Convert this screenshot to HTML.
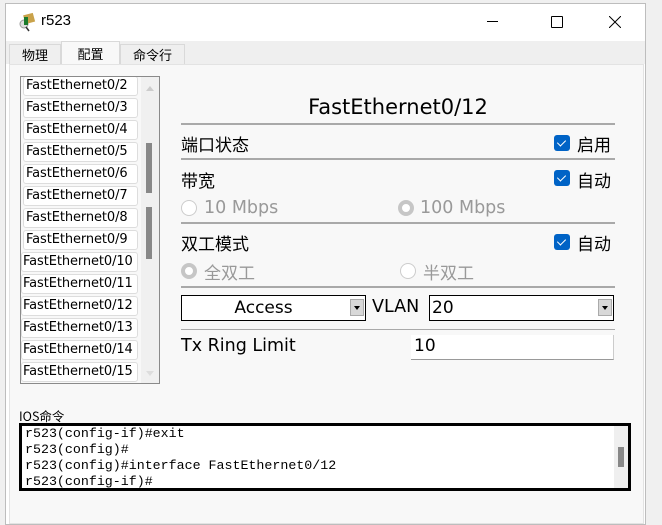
<!DOCTYPE html><html><head><meta charset="utf-8"><style>
*{margin:0;padding:0;box-sizing:border-box}
body{width:662px;height:525px;position:relative;overflow:hidden;background:#f0f0f0;font-family:"DejaVu Sans","Liberation Sans","Noto Sans CJK SC",sans-serif;color:#000}
.a{position:absolute}
.win{left:5px;top:3px;width:641px;height:522px;background:#fff;border:1px solid #bdbdbd}
.tb{left:0;top:37px;width:639px;height:23px;background:#efefef}
.tab{top:3px;height:20px;border:1px solid #d9d9d9;border-bottom:none;background:#efefef;font-size:13px;text-align:center;line-height:19px;font-family:"Noto Sans CJK SC",sans-serif}
.panel{left:3px;top:60px;width:635px;height:460px;background:#f8f8f8;border:1px solid #e3e3e3}
.item{left:17px;width:115px;height:20px;background:#fff;border:1px solid #ddd;border-radius:3px;font-size:13px;line-height:18px;padding-left:2px;white-space:nowrap;letter-spacing:-0.1px}
.line{height:2px;background:#a9a9a9;left:171px;width:434px}
.cjk{font-family:"Noto Sans CJK SC",sans-serif;font-size:17px}
.cb{width:16px;height:16px;background:#0063c6;border-radius:3px}
.cb:after{content:"";position:absolute;left:5px;top:3px;width:4px;height:7px;border:solid #fff;border-width:0 1.5px 1.5px 0;transform:rotate(45deg)}
.rad{width:16px;height:16px;border-radius:50%;border:1px solid #ccc;background:#fff}
.rad.on{border:4px solid #c6c6c6}
.gray{color:#999}
.sel{height:26px;border:1px solid #000;background:#fff;font-size:17px;line-height:24px}
.arr{right:1px;top:3px;width:14px;height:17px;background:#d8d8d8;border:1px solid #aaa}
.arr:after{content:"";position:absolute;left:3px;top:6px;border:3px solid transparent;border-top:4px solid #000}
.con{font-family:"Liberation Mono",monospace;font-size:13.3px;line-height:16px}
</style></head><body>
<div class="a win">
 <svg class="a" style="left:12px;top:8px" width="20" height="20" viewBox="0 0 20 20"><circle cx="6" cy="12" r="4" fill="#ddd" stroke="#999"/><line x1="8" y1="15" x2="11" y2="19" stroke="#333" stroke-width="1.5"/><rect x="6" y="2" width="10" height="9" fill="#c9a24a" transform="rotate(-15 11 6)"/><rect x="6" y="5" width="4" height="8" fill="#1a7a2a"/></svg>
 <div class="a" style="left:35px;top:8px;font-size:15px;font-family:'Liberation Sans',sans-serif">r523</div>
 <div class="a" style="left:481px;top:17px;width:11px;height:1px;background:#000"></div>
 <div class="a" style="left:545px;top:12px;width:12px;height:12px;border:1px solid #000;border-radius:1px"></div>
 <svg class="a" style="left:603px;top:12px" width="12" height="12"><path d="M0 0L12 12M12 0L0 12" stroke="#000" stroke-width="1"/></svg>
 <div class="a tb">
  <div class="a tab" style="left:3px;width:52px">物理</div>
  <div class="a tab" style="left:55px;width:59px;top:0;height:23px;background:#f8f8f8;line-height:24px">配置</div>
  <div class="a tab" style="left:114px;width:65px">命令行</div>
 </div>
 <div class="a panel">
  <div class="a" style="left:10px;top:11px;width:140px;height:308px;border:1px solid #8a8a8a;background:#f8f8f8;overflow:hidden">
   <div class="a item" style="left:2px;top:-1px">FastEthernet0/2</div>
   <div class="a item" style="left:2px;top:21px">FastEthernet0/3</div>
   <div class="a item" style="left:2px;top:43px">FastEthernet0/4</div>
   <div class="a item" style="left:2px;top:65px">FastEthernet0/5</div>
   <div class="a item" style="left:2px;top:87px">FastEthernet0/6</div>
   <div class="a item" style="left:2px;top:109px">FastEthernet0/7</div>
   <div class="a item" style="left:2px;top:131px">FastEthernet0/8</div>
   <div class="a item" style="left:2px;top:153px">FastEthernet0/9</div>
   <div class="a item" style="left:0;top:175px;width:117px;padding-left:1px">FastEthernet0/10</div>
   <div class="a item" style="left:0;top:197px;width:117px;padding-left:1px">FastEthernet0/11</div>
   <div class="a item" style="left:0;top:219px;width:117px;padding-left:1px">FastEthernet0/12</div>
   <div class="a item" style="left:0;top:241px;width:117px;padding-left:1px">FastEthernet0/13</div>
   <div class="a item" style="left:0;top:263px;width:117px;padding-left:1px">FastEthernet0/14</div>
   <div class="a item" style="left:0;top:285px;width:117px;padding-left:1px">FastEthernet0/15</div>
   <div class="a" style="left:120px;top:0;width:18px;height:306px;background:#f0f0f0"></div>
   <div class="a" style="left:125px;top:9px;border:4px solid transparent;border-bottom:5px solid #ccc;border-top:none"></div>
   <div class="a" style="left:125px;top:294px;border:4px solid transparent;border-top:5px solid #ddd;border-bottom:none"></div>
   <div class="a" style="left:125px;top:66px;width:6px;height:50px;background:#888"></div>
   <div class="a" style="left:125px;top:130px;width:6px;height:52px;background:#888"></div>
  </div>
  <div class="a" style="left:171px;top:30px;width:434px;text-align:center;font-size:21px">FastEthernet0/12</div>
  <div class="a line" style="top:58px"></div>
  <div class="a cjk" style="left:171px;top:66px">端口状态</div>
  <div class="a cb" style="left:544px;top:70px"></div><div class="a cjk" style="left:567px;top:66px">启用</div>
  <div class="a line" style="top:93px"></div>
  <div class="a cjk" style="left:171px;top:102px">带宽</div>
  <div class="a cb" style="left:544px;top:105px"></div><div class="a cjk" style="left:567px;top:102px">自动</div>
  <div class="a rad" style="left:171px;top:135px"></div><div class="a gray" style="left:194px;top:133px;font-size:17.5px">10 Mbps</div>
  <div class="a rad on" style="left:388px;top:135px"></div><div class="a gray" style="left:410px;top:133px;font-size:17.5px">100 Mbps</div>
  <div class="a line" style="top:157px"></div>
  <div class="a cjk" style="left:171px;top:165px">双工模式</div>
  <div class="a cb" style="left:544px;top:169px"></div><div class="a cjk" style="left:567px;top:165px">自动</div>
  <div class="a rad on" style="left:171px;top:198px"></div><div class="a cjk gray" style="left:194px;top:194px">全双工</div>
  <div class="a rad" style="left:390px;top:198px"></div><div class="a cjk gray" style="left:413px;top:194px">半双工</div>
  <div class="a line" style="top:221px"></div>
  <div class="a sel" style="left:171px;top:230px;width:185px;text-align:center;padding-right:20px">Access<div class="a arr"></div></div>
  <div class="a" style="left:362px;top:232px;font-size:17.5px">VLAN</div>
  <div class="a sel" style="left:419px;top:230px;width:185px;padding-left:2px">20<div class="a arr"></div></div>
  <div class="a line" style="top:264px;height:1px"></div>
  <div class="a" style="left:171px;top:271px;font-size:17.5px">Tx Ring Limit</div>
  <div class="a" style="left:401px;top:270px;width:203px;height:25px;background:#fff;border-bottom:1px solid #999;border-right:1px solid #ccc;font-size:17px;padding:1px 3px">10</div>
  <div class="a cjk" style="left:9px;top:341px;font-size:12.5px">IOS命令</div>
  <div class="a con" style="left:9px;top:358px;width:612px;height:68px;border:3px solid #000;background:#fff;padding:0 3px">
   r523(config-if)#exit<br>r523(config)#<br>r523(config)#interface FastEthernet0/12<br>r523(config-if)#
   <div class="a" style="right:0;top:0;width:14px;height:62px;background:#efefef"><div class="a" style="left:4px;top:21px;width:6px;height:20px;background:#888"></div></div>
  </div>
 </div>
</div>
</body></html>
